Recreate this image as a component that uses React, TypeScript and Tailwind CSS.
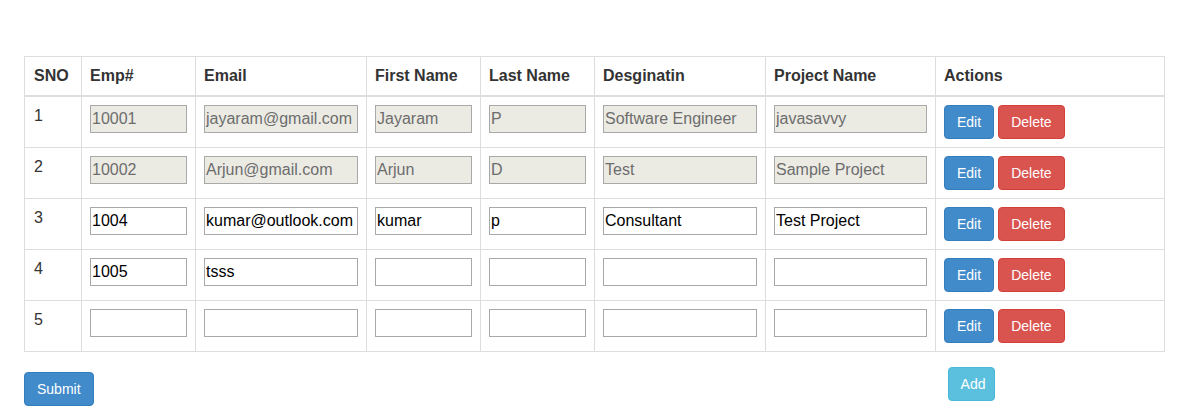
import { useState } from "react";

type Emp = {
  emp: string;
  email: string;
  first: string;
  last: string;
  desig: string;
  project: string;
  locked: boolean;
};

const initial: Emp[] = [
  { emp: "10001", email: "jayaram@gmail.com", first: "Jayaram", last: "P", desig: "Software Engineer", project: "javasavvy", locked: true },
  { emp: "10002", email: "Arjun@gmail.com", first: "Arjun", last: "D", desig: "Test", project: "Sample Project", locked: true },
  { emp: "1004", email: "kumar@outlook.com", first: "kumar", last: "p", desig: "Consultant", project: "Test Project", locked: false },
  { emp: "1005", email: "tsss", first: "", last: "", desig: "", project: "", locked: false },
  { emp: "", email: "", first: "", last: "", desig: "", project: "", locked: false },
];

const headers = ["SNO", "Emp#", "Email", "First Name", "Last Name", "Desginatin", "Project Name", "Actions"];
const fields: (keyof Emp)[] = ["emp", "email", "first", "last", "desig", "project"];

const btn = "h-[34px] px-[12px] rounded-[4px] border text-[14px] text-white leading-[20px]";

export default function App() {
  const [rows, setRows] = useState<Emp[]>(initial);

  const update = (i: number, key: keyof Emp, value: string) => {
    setRows(rows.map((r, idx) => (idx === i ? { ...r, [key]: value } : r)));
  };

  return (
    <div className="min-h-[414px] bg-white pt-[56px] pl-[24px] font-['Liberation_Sans',Arial,sans-serif] text-[16px] text-[#333]">
      <div className="grid w-[1141px] grid-cols-[57px_114px_171px_114px_114px_171px_170px_229px] border-r border-[#ddd]">
        {headers.map((h, idx) => (
          <div
            key={h}
            className={`h-[41px] border-t border-l border-b-2 border-[#ddd] pt-[9px] font-bold leading-[20px] ${
              idx === 0 ? "px-[9px]" : "px-[8px]"
            }`}
          >
            {h}
          </div>
        ))}
        {rows.map((r, i) => (
          <div key={i} className="contents">
            <div className="h-[51px] border-l border-b border-[#ddd] px-[9px] pt-[9px] leading-[20px]">{i + 1}</div>
            {fields.map((f) => (
              <div key={f} className="h-[51px] border-l border-b border-[#ddd] px-[8px] pt-[8px]">
                <input
                  type="text"
                  value={r[f] as string}
                  disabled={r.locked}
                  onChange={(e) => update(i, f, e.target.value)}
                  className={`block h-[28px] w-full border border-[#a9a9a9] px-[1px] text-[16px] outline-none ${
                    r.locked ? "bg-[#ebebe4] text-[#6d6d6d]" : "bg-white text-black"
                  }`}
                />
              </div>
            ))}
            <div className="flex h-[51px] gap-[4px] border-l border-b border-[#ddd] px-[8px] pt-[8px]">
              <button
                className={`${btn} border-[#357ebd] bg-[#428bca]`}
                onClick={() => setRows(rows.map((x, idx) => (idx === i ? { ...x, locked: false } : x)))}
              >
                Edit
              </button>
              <button
                className={`${btn} border-[#d43f3a] bg-[#d9534f]`}
                onClick={() => setRows(rows.filter((_, idx) => idx !== i))}
              >
                Delete
              </button>
            </div>
          </div>
        ))}
      </div>

      <div className="mt-[15px] flex items-start">
        <button className={`${btn} mt-[5px] border-[#357ebd] bg-[#428bca]`}>Submit</button>
        <button
          className={`${btn} ml-[854px] w-[47px] px-0 border-[#46b8da] bg-[#5bc0de]`}
          onClick={() =>
            setRows([...rows, { emp: "", email: "", first: "", last: "", desig: "", project: "", locked: false }])
          }
        >
          Add
        </button>
      </div>
    </div>
  );
}
